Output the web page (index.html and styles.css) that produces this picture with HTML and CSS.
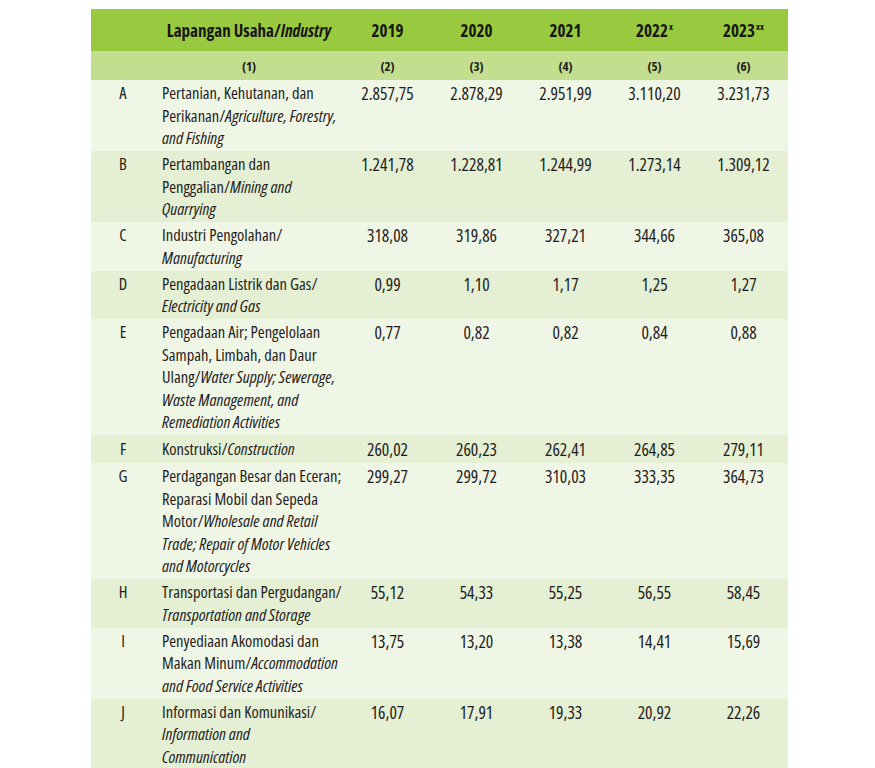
FILE: index.html
```html
<!DOCTYPE html>
<html lang="id">
<head>
<meta charset="utf-8">
<title>Lapangan Usaha</title>
<link rel="stylesheet" href="styles.css">
</head>
<body>
<table class="tbl">
  <colgroup>
    <col class="c-code">
    <col class="c-desc">
    <col class="c-num">
    <col class="c-num">
    <col class="c-num">
    <col class="c-num">
    <col class="c-num">
  </colgroup>
  <thead>
    <tr class="head">
      <th></th>
      <th class="nw">Lapangan Usaha/<i>Industry</i></th>
      <th>2019</th>
      <th>2020</th>
      <th>2021</th>
      <th>2022<sup>x</sup></th>
      <th>2023<sup>xx</sup></th>
    </tr>
    <tr class="sub">
      <th></th>
      <th>(1)</th>
      <th>(2)</th>
      <th>(3)</th>
      <th>(4)</th>
      <th>(5)</th>
      <th>(6)</th>
    </tr>
  </thead>
  <tbody>
    <tr class="light">
      <td class="code">A</td>
      <td class="desc">Pertanian, Kehutanan, dan<br>Perikanan/<i>Agriculture, Forestry,</i><br><i>and Fishing</i></td>
      <td>2.857,75</td><td>2.878,29</td><td>2.951,99</td><td>3.110,20</td><td>3.231,73</td>
    </tr>
    <tr class="dark">
      <td class="code">B</td>
      <td class="desc">Pertambangan dan<br>Penggalian/<i>Mining and</i><br><i>Quarrying</i></td>
      <td>1.241,78</td><td>1.228,81</td><td>1.244,99</td><td>1.273,14</td><td>1.309,12</td>
    </tr>
    <tr class="light">
      <td class="code">C</td>
      <td class="desc">Industri Pengolahan/<br><i>Manufacturing</i></td>
      <td>318,08</td><td>319,86</td><td>327,21</td><td>344,66</td><td>365,08</td>
    </tr>
    <tr class="dark">
      <td class="code">D</td>
      <td class="desc">Pengadaan Listrik dan Gas/<br><i>Electricity and Gas</i></td>
      <td>0,99</td><td>1,10</td><td>1,17</td><td>1,25</td><td>1,27</td>
    </tr>
    <tr class="light">
      <td class="code">E</td>
      <td class="desc">Pengadaan Air; Pengelolaan<br>Sampah, Limbah, dan Daur<br>Ulang/<i>Water Supply; Sewerage,</i><br><i>Waste Management, and</i><br><i>Remediation Activities</i></td>
      <td>0,77</td><td>0,82</td><td>0,82</td><td>0,84</td><td>0,88</td>
    </tr>
    <tr class="dark single">
      <td class="code">F</td>
      <td class="desc">Konstruksi/<i>Construction</i></td>
      <td>260,02</td><td>260,23</td><td>262,41</td><td>264,85</td><td>279,11</td>
    </tr>
    <tr class="light">
      <td class="code">G</td>
      <td class="desc">Perdagangan Besar dan Eceran;<br>Reparasi Mobil dan Sepeda<br>Motor/<i>Wholesale and Retail</i><br><i>Trade; Repair of Motor Vehicles</i><br><i>and Motorcycles</i></td>
      <td>299,27</td><td>299,72</td><td>310,03</td><td>333,35</td><td>364,73</td>
    </tr>
    <tr class="dark">
      <td class="code">H</td>
      <td class="desc">Transportasi dan Pergudangan/<br><i>Transportation and Storage</i></td>
      <td>55,12</td><td>54,33</td><td>55,25</td><td>56,55</td><td>58,45</td>
    </tr>
    <tr class="light">
      <td class="code">I</td>
      <td class="desc">Penyediaan Akomodasi dan<br>Makan Minum/<i>Accommodation</i><br><i>and Food Service Activities</i></td>
      <td>13,75</td><td>13,20</td><td>13,38</td><td>14,41</td><td>15,69</td>
    </tr>
    <tr class="dark">
      <td class="code">J</td>
      <td class="desc">Informasi dan Komunikasi/<br><i>Information and</i><br><i>Communication</i></td>
      <td>16,07</td><td>17,91</td><td>19,33</td><td>20,92</td><td>22,26</td>
    </tr>
  </tbody>
</table>
</body>
</html>
```
FILE: styles.css
```css
html, body {
  margin: 0;
  padding: 0;
  background: #ffffff;
}
body {
  padding: 9px 0 0 91px;
  font-family: "Open Sans", "DejaVu Sans Condensed", sans-serif;
  font-stretch: 75%;
  color: #1f1d1d;
}
.tbl {
  border-collapse: collapse;
  border-spacing: 0;
  width: 697px;
  table-layout: fixed;
}
.c-code { width: 64px; }
.c-desc { width: 188px; }
.c-num { width: 89px; }

.tbl th, .tbl td {
  padding: 0;
  text-align: center;
  vertical-align: top;
}
.nw { white-space: nowrap; }
.head th {
  background: #99c93e;
  height: 42px;
  vertical-align: middle;
  font-size: 17px;
  font-weight: 700;
  color: #171515;
}
.head sup {
  font-size: 9px;
  vertical-align: 7px;
  line-height: 0;
  margin-left: 1px;
}
.sub th {
  background: #c2de8e;
  height: 29px;
  vertical-align: middle;
  font-size: 13px;
  font-weight: 700;
}
.tbl td {
  font-size: 17.5px;
  line-height: 22.5px;
  padding-top: 2px;
  padding-bottom: 1.5px;
}
.tbl .single td {
  padding-top: 3px;
  padding-bottom: 2.5px;
}
.tbl td.code {
  font-size: 16.5px;
}
.tbl td.desc {
  font-size: 16.5px;
  text-align: left;
  padding-left: 7px;
  white-space: nowrap;
}
.desc i {
  font-size: 17px;
}
.light td { background: #f0f6e6; }
.dark td { background: #e4efd3; }
```
